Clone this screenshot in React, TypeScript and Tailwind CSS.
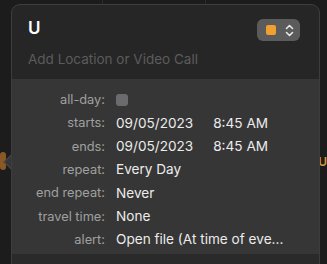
const rows: { label: string; value?: string; time?: string; check?: boolean }[] = [
  { label: "all-day:", check: true },
  { label: "starts:", value: "09/05/2023", time: "8:45 AM" },
  { label: "ends:", value: "09/05/2023", time: "8:45 AM" },
  { label: "repeat:", value: "Every Day" },
  { label: "end repeat:", value: "Never" },
  { label: "travel time:", value: "None" },
  { label: "alert:", value: "Open file (At time of eve..." },
];

const App = () => {
  return (
    <div
      className="relative w-[327px] h-[264px] overflow-hidden bg-[#1c1c1c]"
      style={{ fontFamily: "Inter, 'Liberation Sans', sans-serif" }}
    >
      {/* calendar grid behind */}
      <div className="absolute left-[102px] top-0 h-full w-px bg-[#2c2c2c]" />
      <div className="absolute left-[205px] top-0 h-full w-px bg-[#2c2c2c]" />
      <div className="absolute left-0 top-[152px] w-[6px] h-[18px] rounded-sm bg-[#b8742a] opacity-70" />
      <div className="absolute right-0 top-[156px] text-[12px] font-semibold leading-none text-[#d69a3c]">U</div>

      {/* popover pointer */}
      <div className="absolute left-[6px] top-[156px] w-[12px] h-[12px] rotate-45 bg-[#363636] border-l border-b border-[#484848]" />

      <div className="relative ml-[11px] mt-[4px] w-[309px] rounded-[9px] border border-[#3d3d3d] overflow-hidden bg-[#262626]">
        <div className="h-[74px] px-[16px] pt-[12px]">
          <div className="flex items-start justify-between">
            <div className="text-[17px] font-semibold text-white leading-[22px]">U</div>
            <div className="mt-[2px] mr-[3px] flex items-center gap-[9px] h-[22px] w-[43px] rounded-[6px] bg-[#5b5b5b] pl-[9px]">
              <div className="w-[10px] h-[10px] rounded-[2px] bg-[#f0a030]" />
              <svg width="9" height="13" viewBox="0 0 9 13" fill="none" stroke="#e8e8e8" strokeWidth="1.6" strokeLinecap="round" strokeLinejoin="round">
                <path d="M1.5 4.5 L4.5 1.5 L7.5 4.5" />
                <path d="M1.5 8.5 L4.5 11.5 L7.5 8.5" />
              </svg>
            </div>
          </div>
          <div className="mt-[8px] text-[13.5px] text-[#5c5c5c]">Add Location or Video Call</div>
        </div>

        <div className="bg-[#363636] pt-[9px] pb-[8px] h-[175px]">
          {rows.map((r) => (
            <div key={r.label} className="flex items-center h-[23.3px]">
              <div className="w-[93px] text-right text-[12.8px] text-[#a0a0a0]">{r.label}</div>
              <div className="ml-[11px] flex items-center text-[13.6px] text-[#ececec]">
                {r.check ? (
                  <div className="w-[12px] h-[12px] rounded-[3px] bg-[#6b6b6e]" />
                ) : (
                  <>
                    <span>{r.value}</span>
                    {r.time && <span className="ml-[20px]">{r.time}</span>}
                  </>
                )}
              </div>
            </div>
          ))}
        </div>
        <div className="h-[20px] bg-[#2a2a2a]" />
      </div>
    </div>
  );
};

export default App;
